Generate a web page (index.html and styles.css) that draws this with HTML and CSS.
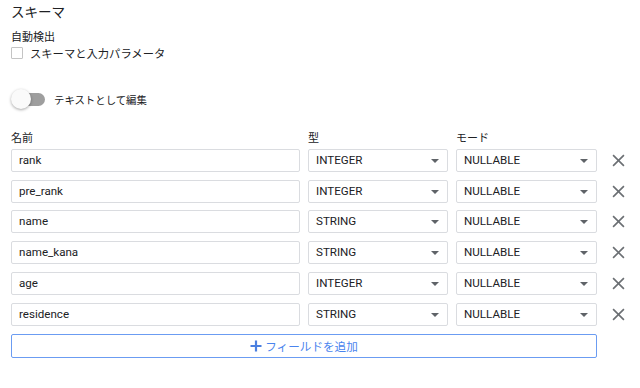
FILE: index.html
```html
<!DOCTYPE html>
<html>
<head>
  <meta charset="UTF-8">
  <title>スキーマ</title>
  <link rel="stylesheet" href="styles.css">
</head>
<body>
  <h2 class="title">スキーマ</h2>

  <div class="autodetect">
    <div class="label">自動検出</div>
    <label class="check-row">
      <span class="checkbox"></span>
      <span>スキーマと入力パラメータ</span>
    </label>
  </div>

  <div class="toggle-row">
    <span class="toggle"><span class="knob"></span></span>
    <span>テキストとして編集</span>
  </div>

  <div class="fields">
    <div class="head">名前</div>
    <div class="head">型</div>
    <div class="head">モード</div>
    <div></div>

    <div class="field">rank</div>
    <div class="field select">INTEGER</div>
    <div class="field select">NULLABLE</div>
    <div class="remove"><svg viewBox="0 0 12 12"><path d="M1 1L11 11M11 1L1 11"/></svg></div>

    <div class="field">pre_rank</div>
    <div class="field select">INTEGER</div>
    <div class="field select">NULLABLE</div>
    <div class="remove"><svg viewBox="0 0 12 12"><path d="M1 1L11 11M11 1L1 11"/></svg></div>

    <div class="field">name</div>
    <div class="field select">STRING</div>
    <div class="field select">NULLABLE</div>
    <div class="remove"><svg viewBox="0 0 12 12"><path d="M1 1L11 11M11 1L1 11"/></svg></div>

    <div class="field">name_kana</div>
    <div class="field select">STRING</div>
    <div class="field select">NULLABLE</div>
    <div class="remove"><svg viewBox="0 0 12 12"><path d="M1 1L11 11M11 1L1 11"/></svg></div>

    <div class="field">age</div>
    <div class="field select">INTEGER</div>
    <div class="field select">NULLABLE</div>
    <div class="remove"><svg viewBox="0 0 12 12"><path d="M1 1L11 11M11 1L1 11"/></svg></div>

    <div class="field">residence</div>
    <div class="field select">STRING</div>
    <div class="field select">NULLABLE</div>
    <div class="remove"><svg viewBox="0 0 12 12"><path d="M1 1L11 11M11 1L1 11"/></svg></div>

    <button class="add">
      <svg viewBox="0 0 12 12"><path d="M6 0.5V11.5M0.5 6H11.5"/></svg>
      <span>フィールドを追加</span>
    </button>
  </div>
</body>
</html>
```

FILE: styles.css
```css
body {
  margin: 0;
  padding: 0 11px;
  font-family: Roboto, "Noto Sans CJK JP", sans-serif;
  font-size: 11px;
  color: #202124;
  background: #fff;
}
.title {
  margin: 0;
  padding-top: 2px;
  font-size: 13.5px;
  font-weight: 400;
  line-height: 20px;
}
.autodetect {
  margin-top: 8px;
}
.label {
  line-height: 16px;
}
.check-row {
  display: flex;
  align-items: center;
  height: 14px;
  gap: 7px;
  font-size: 11.3px;
}
.checkbox {
  width: 10px;
  height: 10px;
  border: 1px solid #c4c4c4;
  border-radius: 1px;
}
.toggle-row {
  display: flex;
  align-items: center;
  height: 20px;
  margin-top: 29px;
  font-size: 10.4px;
}
.toggle {
  position: relative;
  width: 30px;
  height: 13px;
  margin: 0 9px 0 4px;
  border-radius: 7px;
  background: #9e9e9e;
}
.knob {
  position: absolute;
  left: -4px;
  top: -3.5px;
  width: 20px;
  height: 20px;
  border-radius: 50%;
  background: #fafafa;
  box-shadow: 0 1px 3px rgba(0,0,0,0.35);
}
.fields {
  display: grid;
  grid-template-columns: 289px 140px 141px 26px;
  column-gap: 8px;
  row-gap: 7.8px;
  margin-top: 23px;
}
.head {
  line-height: 14px;
  margin-bottom: -5px;
}
.field {
  position: relative;
  box-sizing: border-box;
  height: 23px;
  line-height: 21px;
  padding-left: 7px;
  border: 1px solid #dadce0;
  border-radius: 2px;
  background: #fff;
  font-size: 11.6px;
}
.select::after {
  content: "";
  position: absolute;
  right: 8px;
  top: 9px;
  border-left: 4px solid transparent;
  border-right: 4px solid transparent;
  border-top: 4px solid #5f6368;
}
.remove {
  display: flex;
  align-items: center;
  justify-content: center;
}
.remove svg {
  width: 13px;
  height: 13px;
  stroke: #6b6f73;
  stroke-width: 1.5;
  fill: none;
}
.add {
  grid-column: 1 / 4;
  display: flex;
  align-items: center;
  justify-content: center;
  gap: 3px;
  height: 24px;
  margin: 0;
  padding: 0;
  border: 1px solid #6b9cf2;
  border-radius: 2px;
  background: #fff;
  color: #4a84ee;
  font-family: inherit;
  font-size: 11.6px;
}
.add svg {
  width: 12px;
  height: 12px;
  stroke: #4a7fe0;
  stroke-width: 2.2;
  fill: none;
}
```
